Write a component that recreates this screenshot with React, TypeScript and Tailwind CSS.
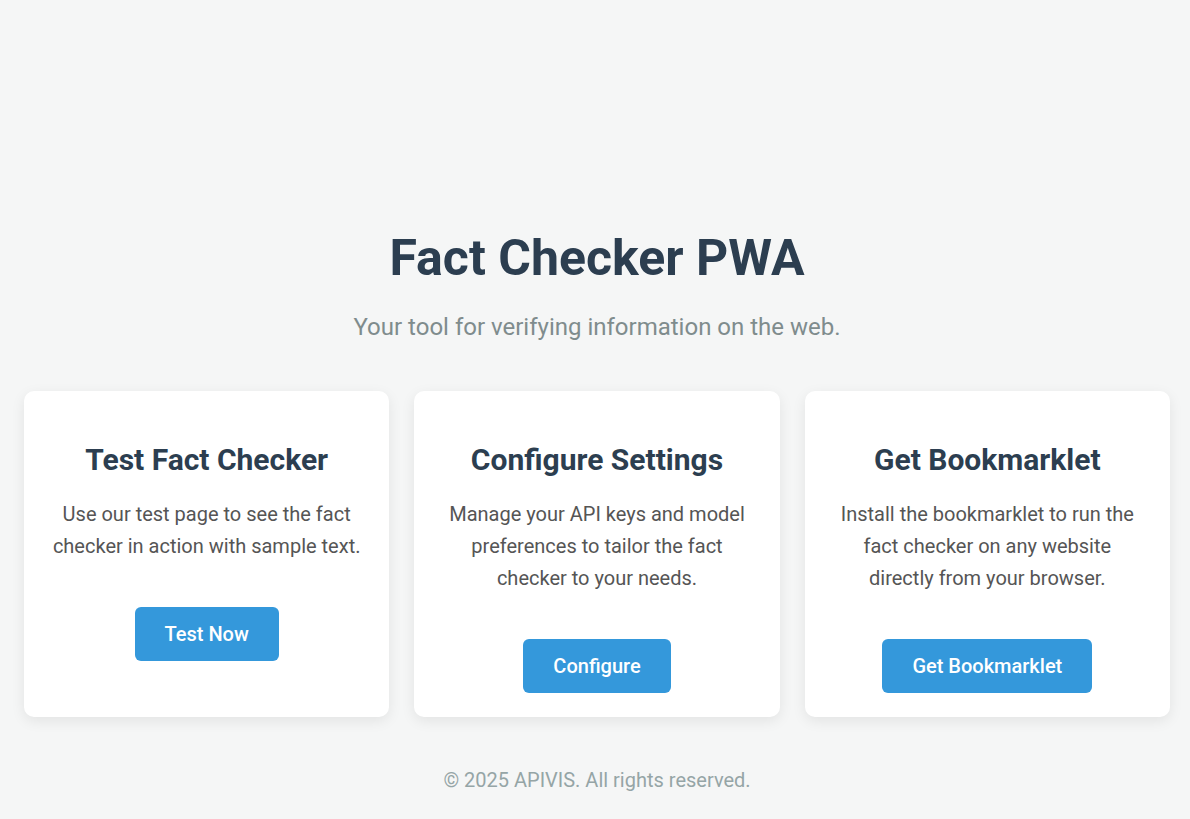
import React from 'react';

interface Feature {
  title: string;
  text: string;
  action: string;
}

const features: Feature[] = [
  {
    title: 'Test Fact Checker',
    text: 'Use our test page to see the fact checker in action with sample text.',
    action: 'Test Now',
  },
  {
    title: 'Configure Settings',
    text: 'Manage your API keys and model preferences to tailor the fact checker to your needs.',
    action: 'Configure',
  },
  {
    title: 'Get Bookmarklet',
    text: 'Install the bookmarklet to run the fact checker on any website directly from your browser.',
    action: 'Get Bookmarklet',
  },
];

function FeatureCard({ feature }: { feature: Feature }) {
  return (
    <div className="flex flex-col items-center rounded-[10px] bg-white px-[26px] pt-[52px] pb-6 text-center shadow-[0_4px_14px_rgba(0,0,0,0.08)]">
      <h2 className="text-[30px] leading-[34px] font-bold text-[#2c3e50]">{feature.title}</h2>
      <p className="mt-[21px] text-[20px] leading-[32px] text-[#555]">{feature.text}</p>
      <button className="mt-[45px] h-[54px] rounded-[6px] bg-[#3498db] px-[30px] text-[20px] font-medium text-white">
        {feature.action}
      </button>
    </div>
  );
}

export default function App() {
  return (
    <div
      className="min-h-screen bg-[#f5f6f6] pt-[228px] pl-6 pr-5"
      style={{ fontFamily: 'Roboto, "Noto Sans", sans-serif' }}
    >
      <header className="text-center">
        <h1 className="text-[50px] leading-[60px] font-bold text-[#2c3e50]">Fact Checker PWA</h1>
        <p className="mt-[21px] text-[24px] leading-[36px] text-[#7f8c8d]">
          Your tool for verifying information on the web.
        </p>
      </header>

      <main className="mt-[46px] grid grid-cols-3 gap-[25px]">
        {features.map((f) => (
          <FeatureCard key={f.title} feature={f} />
        ))}
      </main>

      <footer className="mt-[48px] pb-6 text-center text-[20px] leading-[30px] text-[#95a5a6]">
        © 2025 APIVIS. All rights reserved.
      </footer>
    </div>
  );
}
